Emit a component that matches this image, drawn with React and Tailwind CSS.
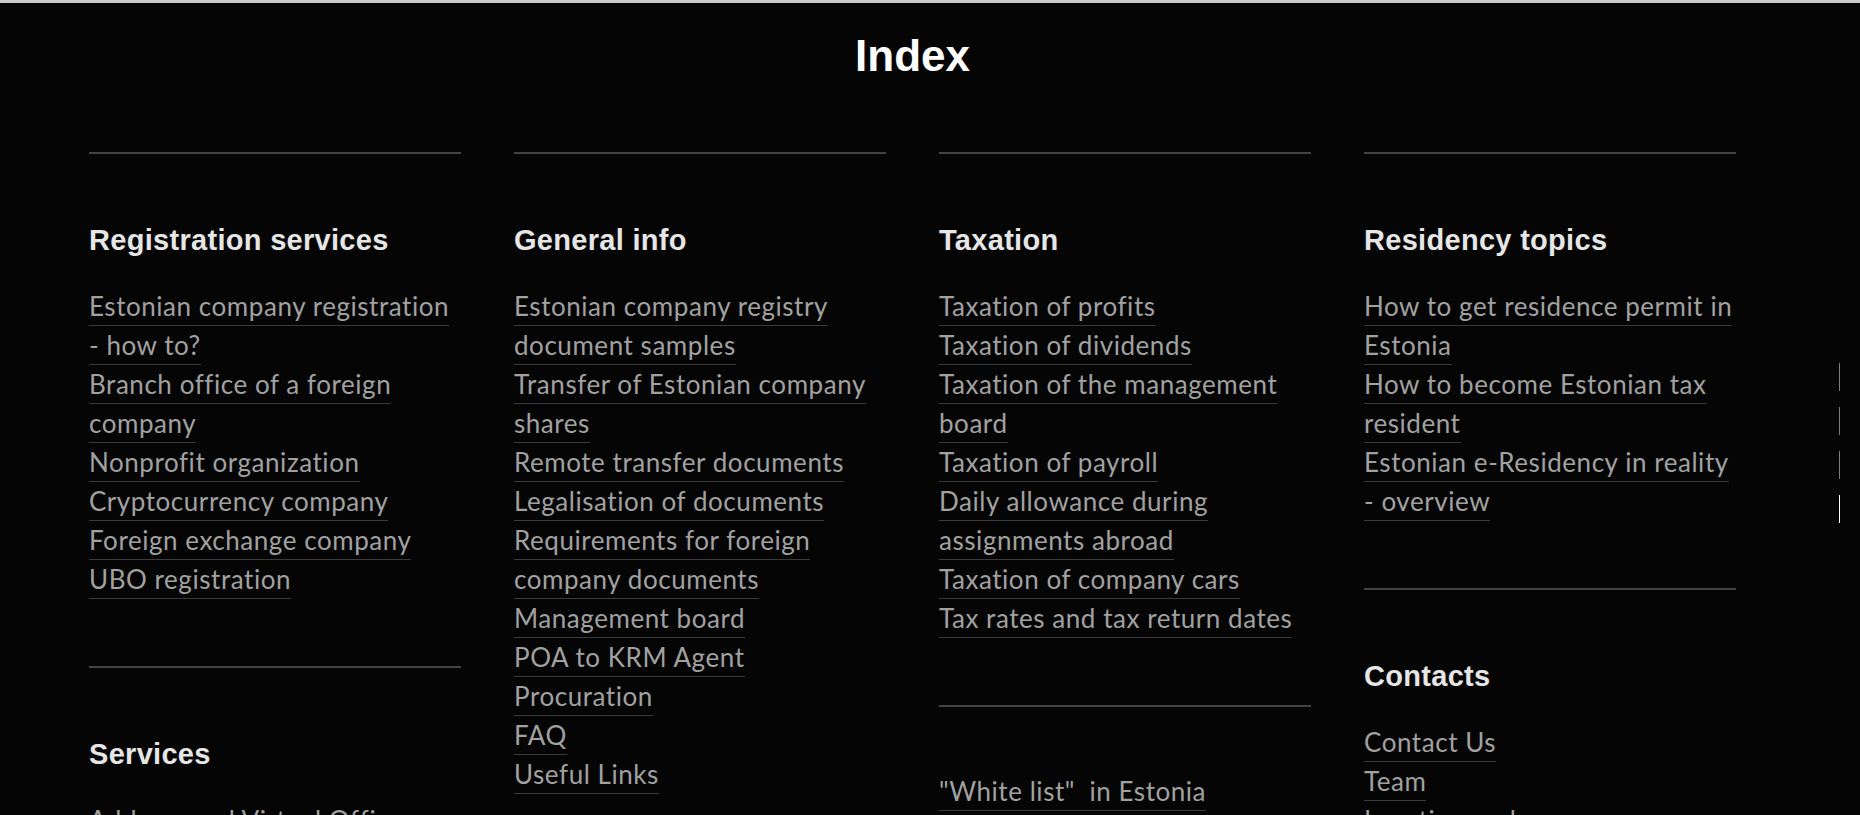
import React from "react";

const columns = [
  [
    {
      title: "Registration services",
      links: [
        "Estonian company registration -\u00a0how to?",
        "Branch office of a foreign company",
        "Nonprofit organization",
        "Cryptocurrency company",
        "Foreign exchange company",
        "UBO registration",
      ],
    },
    {
      title: "Services",
      links: ["Address and Virtual Office", "Accounting services", "Tax advice"],
    },
  ],
  [
    {
      title: "General info",
      links: [
        "Estonian company registry document samples",
        "Transfer of Estonian company shares",
        "Remote transfer documents",
        "Legalisation of documents",
        "Requirements for foreign company documents",
        "Management board",
        "POA to KRM Agent",
        "Procuration",
        "FAQ",
        "Useful Links",
      ],
    },
  ],
  [
    {
      title: "Taxation",
      links: [
        "Taxation of profits",
        "Taxation of dividends",
        "Taxation of the management board",
        "Taxation of payroll",
        "Daily allowance during assignments abroad",
        "Taxation of company cars",
        "Tax rates and tax return dates",
      ],
    },
    {
      title: null,
      links: ['"White list"\u00a0 in Estonia'],
    },
  ],
  [
    {
      title: "Residency topics",
      links: [
        "How to get residence permit in Estonia",
        "How to become Estonian tax resident",
        "Estonian e-Residency in reality -\u00a0overview",
      ],
    },
    {
      title: "Contacts",
      links: ["Contact Us", "Team", "Location and map"],
    },
  ],
];

function Section({ title, links }) {
  return (
    <div
      className={`border-t-2 border-[#434343] pb-[67.5px] ${
        title ? "pt-[69px]" : "pt-[64.5px]"
      }`}
    >
      {title && (
        <h3 className="mb-[29.5px] text-[29px] leading-[34px] font-bold tracking-[0.3px] text-[#e6e6e6] font-['Liberation_Sans',Arial,sans-serif]">
          {title}
        </h3>
      )}
      <ul className="font-['Lato',sans-serif] text-[26px] leading-[39px] tracking-[0.55px] text-[#a1a1a1]">
        {links.map((l) => (
          <li key={l}>
            <a href="#" className="border-b border-[#3a3a3a] pb-[3px]">
              {l}
            </a>
          </li>
        ))}
      </ul>
    </div>
  );
}

export default function App() {
  return (
    <div className="relative h-[815px] overflow-hidden border-t-[3px] border-[#cacaca] bg-[#050505]">
      <div className="ml-[89px] w-[1647px] pt-[31px]">
        <h1 className="mb-[74px] text-center text-[44px] leading-[44px] font-bold text-white font-['Liberation_Sans',Arial,sans-serif]">
          Index
        </h1>
        <div className="grid grid-cols-[repeat(4,372px)] gap-x-[53px]">
          {columns.map((col, i) => (
            <div key={i} className="flex flex-col">
              {col.map((s, j) => (
                <Section key={j} {...s} />
              ))}
            </div>
          ))}
        </div>
      </div>

      {/* side slide nav */}
      <div className="absolute right-[20px] top-[360px] flex flex-col gap-4">
        <span className="h-[28px] w-px bg-[#7d7d7d]" />
        <span className="h-[28px] w-px bg-[#7d7d7d]" />
        <span className="h-[28px] w-px bg-[#7d7d7d]" />
        <span className="h-[28px] w-px bg-white" />
      </div>
    </div>
  );
}
